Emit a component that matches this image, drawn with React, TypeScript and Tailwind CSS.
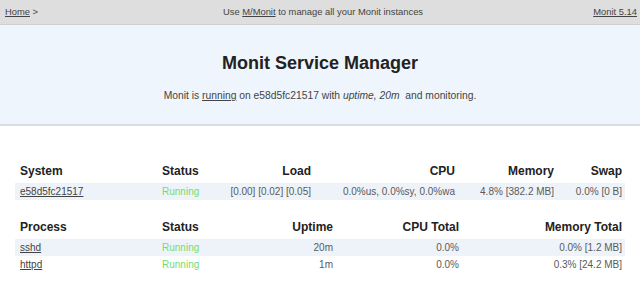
import React from "react";

const font = { fontFamily: '"Liberation Sans", Arial, sans-serif' };

export default function App() {
  return (
    <div className="w-[640px] h-[285px] bg-white overflow-hidden text-[#333]" style={font}>
      <div className="h-[25px] bg-[#dedede] border-b border-[#cfcfcf] flex items-center justify-between pl-[5px] pr-[3px] text-[9.4px] text-[#444]">
        <div className="w-[120px]"><span className="underline">Home</span> &gt;</div>
        <div className="pl-[4px]">Use <span className="underline">M/Monit</span> to manage all your Monit instances</div>
        <div className="w-[120px] text-right"><span className="underline">Monit 5.14</span></div>
      </div>
      <div className="h-[101px] bg-[#eef5fc] border-b-2 border-[#d5dde6] flex flex-col items-center">
        <div className="mt-[26px] text-[18px] font-bold text-[#222] leading-[24px]">Monit Service Manager</div>
        <div className="mt-[14px] text-[10.3px] text-[#444] leading-[14px]">
          Monit is <span className="underline">running</span> on e58d5fc21517 with <i>uptime, 20m</i>&nbsp; and monitoring.
        </div>
      </div>
      <div className="mx-[15px] mt-[36px]">
        <div className="grid grid-cols-[142px_60px_89px_144px_99px_68px] px-[5px] h-[16px] items-center text-[12px] font-bold text-[#222]">
          <div>System</div>
          <div>Status</div>
          <div className="text-right">Load</div>
          <div className="text-right">CPU</div>
          <div className="text-right">Memory</div>
          <div className="text-right">Swap</div>
        </div>
        <div className="mt-[5px] grid grid-cols-[142px_60px_89px_144px_99px_68px] px-[5px] h-[17px] items-center text-[10px] text-[#5a5a5a] bg-[#eef3f9]">
          <div className="underline text-[#444]">e58d5fc21517</div>
          <div className="text-[#72dd72]">Running</div>
          <div className="text-right">[0.00] [0.02] [0.05]</div>
          <div className="text-right">0.0%us, 0.0%sy, 0.0%wa</div>
          <div className="text-right">4.8% [382.2 MB]</div>
          <div className="text-right">0.0% [0 B]</div>
        </div>
        <div className="mt-[18px] grid grid-cols-[142px_60px_111px_126px_163px] px-[5px] h-[16px] items-center text-[12px] font-bold text-[#222]">
          <div>Process</div>
          <div>Status</div>
          <div className="text-right">Uptime</div>
          <div className="text-right">CPU Total</div>
          <div className="text-right">Memory Total</div>
        </div>
        <div className="mt-[5px] grid grid-cols-[142px_60px_111px_126px_163px] px-[5px] h-[17px] items-center text-[10px] text-[#5a5a5a] bg-[#eef3f9]">
          <div className="underline text-[#444]">sshd</div>
          <div className="text-[#72dd72]">Running</div>
          <div className="text-right">20m</div>
          <div className="text-right">0.0%</div>
          <div className="text-right">0.0% [1.2 MB]</div>
        </div>
        <div className="grid grid-cols-[142px_60px_111px_126px_163px] px-[5px] h-[17px] items-center text-[10px] text-[#5a5a5a]">
          <div className="underline text-[#444]">httpd</div>
          <div className="text-[#72dd72]">Running</div>
          <div className="text-right">1m</div>
          <div className="text-right">0.0%</div>
          <div className="text-right">0.3% [24.2 MB]</div>
        </div>
      </div>
    </div>
  );
}
